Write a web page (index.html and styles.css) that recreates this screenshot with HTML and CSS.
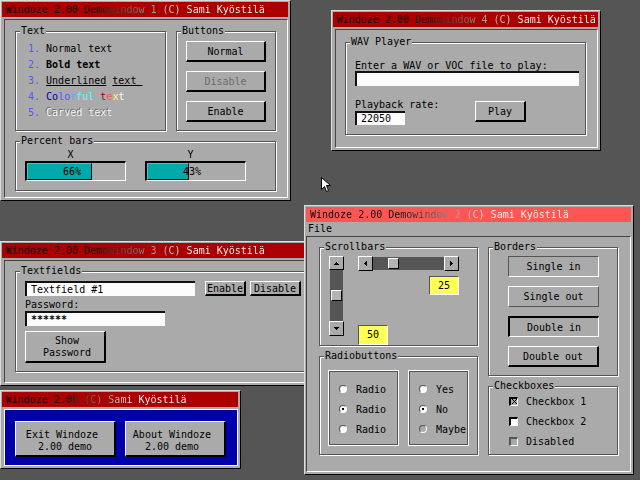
FILE: index.html
```html
<!DOCTYPE html>
<html>
<head>
<meta charset="utf-8">
<title>Windoze 2.00</title>
<link rel="stylesheet" href="styles.css">
</head>
<body>
<div class="desk">

  <div class="win w1">
    <div class="title"><span class="tt">Windoze 2.00 Demowindow 1 (C) Sami Kyöstilä</span></div>
    <div class="client c1">
      <div class="grp g-text">
        <div class="lbl">Text</div>
        <div class="tl"><span class="num">1.</span> Normal text</div>
        <div class="tl"><span class="num">2.</span> <b>Bold text</b></div>
        <div class="tl"><span class="num">3.</span> <u>Underlined</u> <u>text&nbsp;</u></div>
        <div class="tl"><span class="num">4.</span> <span class="k1">C</span><span class="k1">o</span><span class="k2">l</span><span class="k2">o</span><span class="k3">r</span><span class="k4">f</span><span class="k4">u</span><span class="k4">l</span> <span class="k5">t</span><span class="k6">e</span><span class="k7">x</span><span class="k8">t</span></div>
        <div class="tl"><span class="num">5.</span> <span class="carved">Carved text</span></div>
      </div>
      <div class="grp g-btns">
        <div class="lbl">Buttons</div>
        <div class="btn">Normal</div>
        <div class="btn dis">Disable</div>
        <div class="btn">Enable</div>
      </div>
      <div class="grp g-pct">
        <div class="lbl">Percent bars</div>
        <div class="pcol">
          <div class="plbl">X</div>
          <div class="bar"><div class="fill" style="width:66%"></div><span class="ptxt">66%</span></div>
        </div>
        <div class="pcol">
          <div class="plbl">Y</div>
          <div class="bar"><div class="fill" style="width:43%"></div><span class="ptxt">43%</span></div>
        </div>
      </div>
    </div>
  </div>

  <div class="win w4">
    <div class="title"><span class="tt">Windoze 2.00 Demowindow 4 (C) Sami Kyöstilä</span></div>
    <div class="client c4">
      <div class="grp g-wav">
        <div class="lbl">WAV Player</div>
        <div class="txt">Enter a WAV or VOC file to play:</div>
        <div class="inp inp-file"></div>
        <div class="wrow">
          <div class="wcol">
            <div class="txt">Playback rate:</div>
            <div class="inp inp-rate">22050</div>
          </div>
          <div class="btn btn-play">Play</div>
        </div>
      </div>
    </div>
  </div>

  <div class="win w3">
    <div class="title"><span class="tt">Windoze 2.00 Demowindow 3 (C) Sami Kyöstilä</span></div>
    <div class="client c3">
      <div class="grp g-tf">
        <div class="lbl">Textfields</div>
        <div class="tfrow">
          <div class="inp inp-tf">Textfield #1</div>
          <div class="btn sbtn-en">Enable</div>
          <div class="btn sbtn-dis">Disable</div>
        </div>
        <div class="txt pw-lbl">Password:</div>
        <div class="inp inp-pw"><b>******</b></div>
        <div class="btn btn-show"><span>Show</span><span>Password</span></div>
      </div>
    </div>
  </div>

  <div class="win w5">
    <div class="title"><span class="tt">Windoze 2.00 (C) Sami Kyöstilä</span></div>
    <div class="client c5">
      <div class="btn bigbtn"><span>Exit Windoze </span><span>2.00 demo</span></div>
      <div class="btn bigbtn"><span>About Windoze </span><span>2.00 demo </span></div>
    </div>
  </div>

  <div class="win w2">
    <div class="title active"><span class="tt">Windoze 2.00 Demowindow 2 (C) Sami Kyöstilä</span></div>
    <div class="menubar">File</div>
    <div class="client c2">
      <div class="col">
        <div class="grp g-sb">
          <div class="lbl">Scrollbars</div>
          <div class="vscroll">
            <div class="sb sb-up"><svg width="5" height="3" viewBox="0 0 5 3"><path d="M2 0h1v1h1v1h1v1H0V2h1V1h1z"/></svg></div>
            <div class="vtrack"><div class="thumb vthumb"></div></div>
            <div class="sb sb-down"><svg width="5" height="3" viewBox="0 0 5 3"><path d="M0 0h5v1H4v1H3v1H2V2H1V1H0z"/></svg></div>
          </div>
          <div class="sbright">
            <div class="hscroll">
              <div class="sb sb-h"><svg width="3" height="5" viewBox="0 0 3 5"><path d="M0 2v1h1v1h1v1h1V0H2v1H1v1z"/></svg></div>
              <div class="htrack"><div class="thumb hthumb"></div></div>
              <div class="sb sb-h"><svg width="3" height="5" viewBox="0 0 3 5"><path d="M3 2v1H2v1H1v1H0V0h1v1h1v1z"/></svg></div>
            </div>
            <div class="val v25">25</div>
            <div class="val v50">50</div>
          </div>
        </div>
        <div class="grp g-radio">
          <div class="lbl">Radiobuttons</div>
          <div class="rbox rA">
            <div class="rrow"><span class="radio"></span>Radio</div>
            <div class="rrow"><span class="radio on"></span>Radio</div>
            <div class="rrow"><span class="radio"></span>Radio</div>
          </div>
          <div class="rbox rB">
            <div class="rrow"><span class="radio"></span>Yes</div>
            <div class="rrow"><span class="radio on"></span>No</div>
            <div class="rrow"><span class="radio dis"></span>Maybe</div>
          </div>
        </div>
      </div>
      <div class="col">
        <div class="grp g-brd">
          <div class="lbl">Borders</div>
          <div class="bb sin">Single in</div>
          <div class="bb sout">Single out</div>
          <div class="bb din">Double in</div>
          <div class="bb dout">Double out</div>
        </div>
        <div class="grp g-chk">
          <div class="lbl">Checkboxes</div>
          <div class="crow"><span class="chk chk-x"><svg width="5" height="5" viewBox="0 0 5 5"><path d="M0 0h1v1H0zM4 0h1v1H4zM1 1h1v1H1zM3 1h1v1H3zM2 2h1v1H2zM1 3h1v1H1zM3 3h1v1H3zM0 4h1v1H0zM4 4h1v1H4z"/></svg></span>Checkbox 1</div>
          <div class="crow"><span class="chk"></span>Checkbox 2</div>
          <div class="crow"><span class="chk chk-dis"></span>Disabled</div>
        </div>
      </div>
    </div>
  </div>

  <svg class="cursor" width="11" height="16" viewBox="0 0 11 16"><path d="M0.5 0.5V12.5L3.5 9.5L5.5 14.5L7.5 13.5L5.5 8.5H9.5Z" fill="#fff" stroke="#000"/></svg>
</div>
</body>
</html>
```

FILE: styles.css
```css
* { box-sizing: border-box; }
html, body { margin: 0; padding: 0; }
body {
  width: 640px;
  height: 480px;
  background: #555555;
  overflow: hidden;
  font-family: "DejaVu Sans Mono", "Liberation Mono", monospace;
  font-size: 10px;
  color: #000;
}
.desk { position: relative; width: 640px; height: 480px; }

/* window frame */
.win {
  position: absolute;
  display: flex;
  flex-direction: column;
  background: #aaaaaa;
  border: 1px solid;
  border-color: #dddddd #000 #000 #dddddd;
  padding: 1px 2px 2px 1px;
}
.title {
  flex: none;
  height: 15px;
  line-height: 15px;
  background: #aa0000;
  padding-left: 4px;
  white-space: pre;
  overflow: hidden;
}
.title.active { background: #ff5555; }
.tt {
  display: inline-block;
  background: linear-gradient(90deg, #000 0%, #111 35%, #fff 72%, #fff 100%);
  -webkit-background-clip: text;
  background-clip: text;
  color: transparent;
}
.client {
  flex: 1;
  margin: 2px 0 0 2px;
  border: 1px solid;
  border-color: #444 #fff #fff #444;
}

.w1 { left: 0; top: 0; width: 291px; height: 201px; }
.w4 { left: 331px; top: 10px; width: 270px; height: 141px; }
.w3 { left: 0; top: 241px; width: 322px; height: 145px; }
.w5 { left: 0; top: 390px; width: 241px; height: 79px; }
.w2 { left: 304px; top: 205px; width: 330px; height: 270px; }

/* group boxes */
.grp {
  position: relative;
  border: 1px solid #555;
  box-shadow: inset 1px 1px 0 #fff, 1px 1px 0 #fff;
}
.lbl {
  position: absolute;
  top: -6px;
  left: 4px;
  height: 10px;
  line-height: 10px;
  padding: 0 1px;
  background: #aaaaaa;
  white-space: pre;
}
.txt { line-height: 10px; white-space: pre; }

/* buttons */
.btn {
  display: flex;
  align-items: center;
  justify-content: center;
  background: #aaaaaa;
  border-style: solid;
  border-width: 1px 2px 2px 1px;
  border-color: #fff #000 #000 #fff;
  white-space: pre;
  flex: none;
}
.btn.dis { color: #6c6c6c; }

/* text inputs */
.inp {
  background: #fcfcfc;
  border-style: solid;
  border-width: 2px 0 0 2px;
  border-color: #111;
  padding-left: 4px;
  white-space: pre;
}

/* window 1 */
.c1 {
  padding: 11px 0 0 10px;
  display: grid;
  grid-template-columns: 151px 100px;
  grid-template-rows: 100px 50px;
  gap: 10px;
  align-content: start;
}
.g-text { padding: 9px 0 0 12px; }
.tl { line-height: 16px; white-space: pre; }
.num { color: #5555ff; }
.tl u { text-underline-offset: 1px; }
.k1 { color: #0000aa; }
.k2 { color: #5555ff; }
.k3 { color: #55aaff; }
.k4 { color: #55ffff; }
.k5 { color: #aa0000; }
.k6 { color: #ff5555; }
.k7 { color: #ffff55; }
.k8 { color: #ffffff; }
.carved { color: #f4f4f4; text-shadow: -1px -1px 0 #6a6a6a; }
.g-btns {
  padding: 9px 0 0 9px;
  display: flex;
  flex-direction: column;
  gap: 9px;
}
.g-btns .btn { width: 80px; height: 21px; }
.g-pct {
  grid-column: 1 / 3;
  padding: 8px 0 0 9px;
  display: flex;
  gap: 19px;
}
.pcol { width: 101px; }
.plbl { height: 11px; line-height: 10px; text-align: center; padding-right: 10px; }
.bar {
  position: relative;
  height: 20px;
  border-style: solid;
  border-width: 2px 1px 1px 2px;
  border-color: #000 #fff #fff #000;
}
.fill {
  height: 100%;
  background: #00aaaa;
  border: 1px solid;
  border-color: #33cccc #000 #000 #33cccc;
}
.ptxt {
  position: absolute;
  left: 0;
  right: 0;
  top: 0;
  line-height: 17px;
  text-align: center;
  padding-right: 8px;
}

/* window 4 */
.c4 { padding: 12px 0 0 9px; }
.g-wav { width: 241px; height: 93px; padding: 18px 0 0 9px; }
.inp-file { width: 224px; height: 15px; }
.wrow { display: flex; margin-top: 14px; }
.wcol { width: 120px; }
.inp-rate { width: 50px; height: 14px; line-height: 12px; margin-top: 1px; }
.btn-play { width: 51px; height: 21px; margin-top: 1px; }

/* window 3 */
.c3 { padding: 10px 0 0 10px; }
.g-tf { width: 296px; height: 101px; padding: 9px 0 0 9px; }
.tfrow { display: flex; gap: 4px; }
.inp-tf { width: 170px; height: 15px; line-height: 13px; margin-right: 6px; }
.sbtn-en { width: 41px; height: 15px; }
.sbtn-dis { width: 51px; height: 15px; }
.pw-lbl { margin-top: 4px; }
.inp-pw { width: 140px; height: 15px; line-height: 13px; margin-top: 1px; }
.btn-show {
  width: 81px;
  height: 32px;
  margin-top: 5px;
  flex-direction: column;
  line-height: 12px;
  padding: 1px 0 0 4px;
}

/* window 5 */
.c5 {
  background: #0000aa;
  border-color: #fff;
  padding: 11px 0 0 10px;
  display: flex;
  gap: 9px;
}
.bigbtn {
  width: 101px;
  height: 36px;
  flex-direction: column;
  line-height: 12px;
  padding-top: 4px;
}

/* window 2 */
.menubar { flex: none; height: 14px; line-height: 14px; padding-left: 2px; }
.c2 {
  margin: 0;
  padding: 10px 0 0 12px;
  display: flex;
  gap: 10px;
}
.col { display: flex; flex-direction: column; gap: 10px; }
.g-sb {
  width: 159px;
  height: 99px;
  padding: 8px 0 0 9px;
  display: flex;
  gap: 14px;
}
.vscroll { width: 15px; height: 80px; display: flex; flex-direction: column; }
.sb {
  flex: none;
  display: flex;
  align-items: center;
  justify-content: center;
  background: #aaaaaa;
  border: 1px solid;
  border-color: #fff #000 #000 #fff;
}
.sb-up { height: 14px; }
.sb-down { height: 15px; }
.sb-h { width: 15px; }
.vtrack {
  flex: 1;
  margin: 0 1px;
  background: #555;
  display: flex;
  flex-direction: column;
  align-items: center;
}
.thumb {
  flex: none;
  width: 11px;
  height: 11px;
  background: #b4b4b4;
  border: 1px solid;
  border-color: #fff #000 #000 #fff;
}
.vthumb { margin-top: 20px; }
.sbright { width: 101px; display: flex; flex-direction: column; }
.hscroll { height: 15px; display: flex; }
.htrack {
  flex: 1;
  margin: 1px 0;
  background: #555;
  display: flex;
  align-items: center;
}
.hthumb { margin-left: 15px; }
.val {
  width: 30px;
  background: #ffff55;
  border: 1px solid;
  border-color: #555 #fff #fff #555;
  text-align: center;
}
.v25 { align-self: flex-end; margin-top: 5px; height: 19px; line-height: 17px; }
.v50 { align-self: flex-start; margin-top: auto; height: 20px; line-height: 18px; }

.g-radio {
  width: 159px;
  height: 99px;
  padding: 13px 0 0 8px;
  display: flex;
  gap: 9px;
}
.rbox {
  height: 76px;
  border: 1px solid #fff;
  box-shadow: inset 0 0 0 1px #555;
  padding: 8px 0 0 10px;
}
.rA { width: 71px; }
.rB { width: 61px; }
.rrow { height: 20px; display: flex; align-items: center; gap: 9px; }
.radio {
  position: relative;
  flex: none;
  width: 8px;
  height: 8px;
  border-radius: 50%;
  border: 1px solid;
  border-color: #555 #fff #fff #555;
  background: #fff;
}
.radio.on::after {
  content: "";
  position: absolute;
  left: 2px;
  top: 2px;
  width: 2px;
  height: 2px;
  background: #000;
}
.radio.dis { background: #aaaaaa; }

.g-brd {
  width: 130px;
  height: 129px;
  padding: 8px 0 0 19px;
  display: flex;
  flex-direction: column;
  gap: 9px;
}
.bb {
  width: 91px;
  height: 21px;
  display: flex;
  align-items: center;
  justify-content: center;
  border-style: solid;
  white-space: pre;
}
.sin { border-width: 1px; border-color: #555 #fff #fff #555; }
.sout { border-width: 1px; border-color: #fff #555 #555 #fff; }
.din { border-width: 2px 1px 1px 2px; border-color: #000 #fff #fff #000; }
.dout { border-width: 1px 2px 2px 1px; border-color: #fff #000 #000 #fff; }

.g-chk { width: 130px; height: 69px; padding: 4px 0 0 20px; }
.crow { height: 20px; display: flex; align-items: center; gap: 8px; }
.chk {
  flex: none;
  width: 9px;
  height: 9px;
  display: flex;
  align-items: center;
  justify-content: center;
  border-style: solid;
  border-width: 2px 1px 1px 2px;
  border-color: #000 #fff #fff #000;
  background: #fff;
}
.chk-x { background: #aaaaaa; }
.chk-dis { background: #aaaaaa; border-color: #555 #fff #fff #555; }

.cursor { position: absolute; left: 321px; top: 177px; }
```
